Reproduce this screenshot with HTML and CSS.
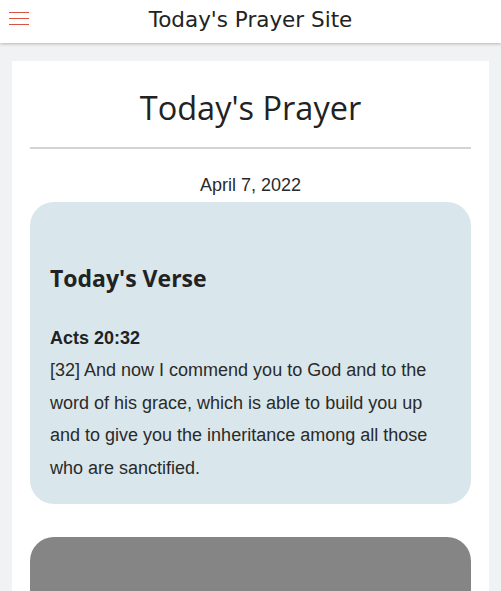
FILE: index.html
```html
<!DOCTYPE html>
<html lang="en">
<head>
<meta charset="utf-8">
<title>Today's Prayer Site</title>
<link rel="stylesheet" href="styles.css">
</head>
<body>
<header class="topbar">
  <button class="menu-btn" aria-label="Menu">
    <svg width="20" height="14" viewBox="0 0 20 14"><rect x="0" y="0" width="20" height="1" fill="#d9533f"/><rect x="0" y="6" width="20" height="1" fill="#d9533f"/><rect x="0" y="12" width="20" height="1" fill="#d9533f"/></svg>
  </button>
  <div class="site-title">Today's Prayer Site</div>
</header>
<main class="page">
  <section class="card">
    <h1 class="title">Today's Prayer</h1>
    <hr class="rule">
    <div class="date">April 7, 2022</div>
    <div class="verse-box">
      <h2 class="verse-heading">Today's Verse</h2>
      <p class="verse-text"><b>Acts 20:32</b><br>[32] And now I commend you to God and to the word of his grace, which is able to build you up and to give you the inheritance among all those who are sanctified.</p>
    </div>
    <div class="grey-box"></div>
  </section>
</main>
</body>
</html>
```
FILE: styles.css
```css
html, body {
  margin: 0;
  padding: 0;
}
body {
  background: #f1f2f4;
  color: #2a2a2a;
  font-family: "Liberation Sans", Arial, sans-serif;
  height: 591px;
  overflow: hidden;
}
.topbar {
  position: relative;
  height: 43px;
  background: #fff;
  box-shadow: 0 1px 3px rgba(0,0,0,0.25);
  display: flex;
  align-items: center;
  justify-content: center;
  z-index: 2;
}
.menu-btn {
  position: absolute;
  left: 9px;
  top: 12px;
  padding: 0;
  margin: 0;
  border: 0;
  background: none;
  width: 20px;
  height: 14px;
  display: block;
}
.menu-btn svg { display: block; }
.site-title {
  font-family: "Comic Sans MS", "DejaVu Sans", sans-serif;
  font-size: 21.5px;
  color: #222;
  line-height: 43px;
  margin-top: -4px;
}
.page {
  padding: 18px 12px 0;
}
.card {
  background: #fff;
  padding: 23px 18px 0;
}
.title {
  margin: 0;
  font-family: "Open Sans", sans-serif;
  font-weight: 400;
  font-size: 32.5px;
  line-height: 48px;
  text-align: center;
  color: #222;
}
.rule {
  margin: 15px 0 0;
  border: 0;
  height: 2px;
  background: #d3d3d3;
}
.date {
  margin-top: 24px;
  font-size: 18px;
  line-height: 24px;
  text-align: center;
  color: #2a2a2a;
}
.verse-box {
  margin-top: 5px;
  background: #d9e7ec;
  border-radius: 24px;
  padding: 60px 20px 20px;
}
.verse-heading {
  margin: 0;
  font-family: "Open Sans", sans-serif;
  font-weight: 700;
  font-size: 23px;
  line-height: 32px;
  color: #222;
}
.verse-text {
  margin: 28px 0 0;
  font-size: 18px;
  line-height: 32.4px;
  color: #2a2a2a;
}
.verse-text b { color: #222; }
.grey-box {
  margin-top: 33px;
  height: 54px;
  background: #858586;
  border-radius: 24px 24px 0 0;
}
```
